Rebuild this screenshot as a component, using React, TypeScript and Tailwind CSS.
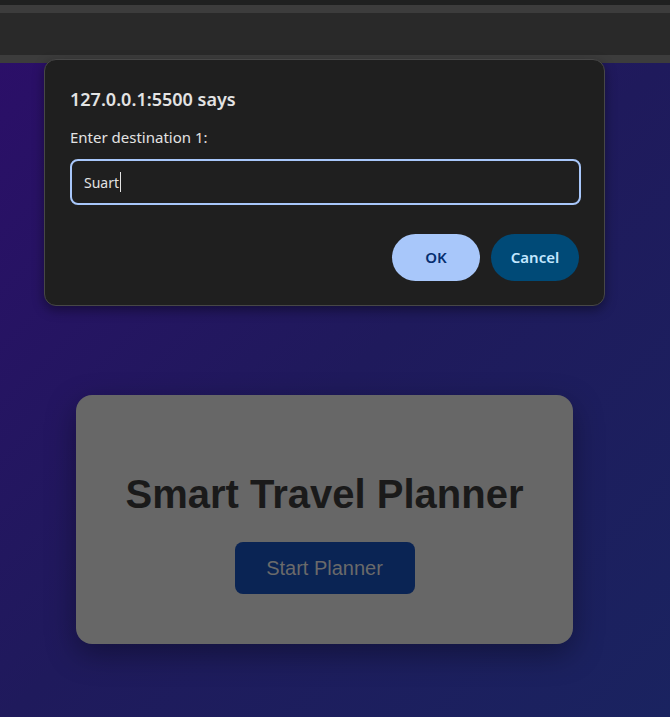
export default function App() {
  return (
    <div className="relative w-[670px] h-[717px] overflow-hidden bg-[#1f2020] font-['Noto_Sans',sans-serif]">
      {/* browser chrome strip */}
      <div className="h-[5px] bg-[#1f2020]" />
      <div className="h-[8px] bg-[#3c3c3c]" />
      <div className="h-[42px] bg-[#292929]" />
      <div className="h-[8px] bg-[#3c3c3c]" />

      {/* page */}
      <div className="h-[654px] bg-[linear-gradient(135deg,#2b0f68_0%,#1f1a5c_50%,#1a2360_100%)] pt-[332px] pl-[76px]">
        <div className="w-[497px] h-[249px] rounded-[16px] bg-[#676767] shadow-[0_10px_30px_rgba(0,0,0,0.35)] flex flex-col items-center pt-[76px] font-['Liberation_Sans',Arial,sans-serif]">
          <h1 className="text-[40px] leading-[46px] font-bold text-[#1a1a1a]">Smart Travel Planner</h1>
          <button className="mt-[25px] w-[180px] h-[52px] rounded-[8px] bg-[#0a2454] text-[20px] text-[#6a6a6a]">
            Start Planner
          </button>
        </div>
      </div>

      {/* alert dialog */}
      <div className="absolute left-[44px] top-[59px] w-[561px] h-[247px] rounded-[12px] bg-[#1f1f1f] border border-[#474747] shadow-[0_4px_12px_rgba(0,0,0,0.4)] px-[25px] pt-[26px]">
        <div className="text-[18px] leading-[26px] font-semibold text-[#e3e3e3]">127.0.0.1:5500 says</div>
        <div className="mt-[15px] text-[15px] leading-[20px] text-[#e3e3e3]">Enter destination 1:</div>
        <div className="mt-[12px] h-[46px] w-[511px] rounded-[8px] border-2 border-[#a8c7fa] flex items-center pl-[12px] text-[14px] text-[#e3e3e3]">
          Suart<span className="ml-[1px] inline-block w-[1px] h-[20px] bg-[#e3e3e3]" />
        </div>
        <div className="mt-[29px] flex justify-end gap-[11px]">
          <button className="w-[88px] h-[47px] rounded-full bg-[#a8c7fa] text-[#062e6f] text-[15px] font-semibold">OK</button>
          <button className="w-[88px] h-[47px] rounded-full bg-[#004a77] text-[#c2e7ff] text-[15px] font-semibold">Cancel</button>
        </div>
      </div>
    </div>
  );
}
